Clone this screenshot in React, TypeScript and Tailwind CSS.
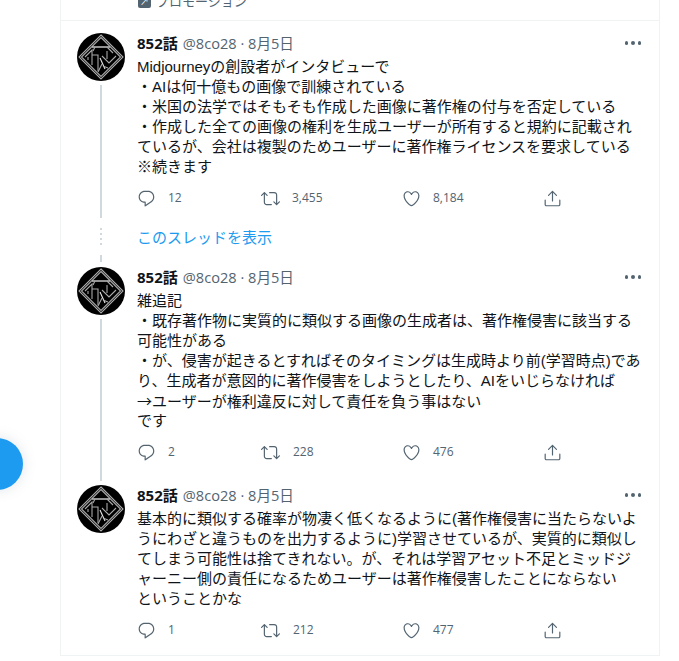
import type { ReactNode } from 'react';

const paths = {
  reply:
    'M14.046 2.242l-4.148-.01h-.002c-4.374 0-7.8 3.427-7.8 7.802 0 4.098 3.186 7.206 7.465 7.37v3.828c0 .108.044.286.12.403.142.225.384.347.632.347.138 0 .277-.038.402-.118.264-.168 6.473-4.14 8.088-5.506 1.902-1.61 3.04-3.97 3.043-6.312v-.017c-.006-4.367-3.43-7.787-7.8-7.788zm3.787 12.972c-1.134.96-4.862 3.405-6.772 4.643V16.67c0-.414-.335-.75-.75-.75h-.396c-3.66 0-6.318-2.476-6.318-5.886 0-3.534 2.768-6.302 6.3-6.302l4.147.01h.002c3.532 0 6.3 2.766 6.302 6.296-.003 1.91-.942 3.844-2.514 5.176z',
  retweet:
    'M23.77 15.67c-.292-.293-.767-.293-1.06 0l-2.22 2.22V7.65c0-2.068-1.683-3.75-3.75-3.75h-5.85c-.414 0-.75.336-.75.75s.336.75.75.75h5.85c1.24 0 2.25 1.01 2.25 2.25v10.24l-2.22-2.22c-.293-.293-.768-.293-1.06 0s-.294.768 0 1.06l3.5 3.5c.145.147.337.22.53.22s.383-.072.53-.22l3.5-3.5c.294-.292.294-.767 0-1.06zm-10.66 3.28H7.26c-1.24 0-2.25-1.01-2.25-2.25V6.46l2.22 2.22c.148.147.34.22.532.22s.384-.073.53-.22c.293-.293.293-.768 0-1.06l-3.5-3.5c-.293-.294-.768-.294-1.06 0l-3.5 3.5c-.294.292-.294.767 0 1.06s.767.293 1.06 0l2.22-2.22V16.7c0 2.068 1.683 3.75 3.75 3.75h5.85c.414 0 .75-.336.75-.75s-.337-.75-.75-.75z',
  like:
    'M12 21.638h-.014C9.403 21.59 1.95 14.856 1.95 8.478c0-3.064 2.525-5.754 5.403-5.754 2.29 0 3.83 1.58 4.646 2.73.814-1.148 2.354-2.73 4.645-2.73 2.88 0 5.404 2.69 5.404 5.755 0 6.376-7.454 13.11-10.037 13.157H12zM7.354 4.225c-2.08 0-3.903 1.988-3.903 4.255 0 5.74 7.034 11.596 8.55 11.658 1.518-.062 8.55-5.917 8.55-11.658 0-2.267-1.823-4.255-3.903-4.255-2.528 0-3.94 2.936-3.952 2.965-.23.562-1.156.562-1.387 0-.014-.03-1.425-2.965-3.954-2.965z',
  share:
    'M17.53 7.47l-5-5c-.293-.293-.768-.293-1.06 0l-5 5c-.294.293-.294.768 0 1.06s.767.294 1.06 0l3.72-3.72V15c0 .414.336.75.75.75s.75-.336.75-.75V4.81l3.72 3.72c.146.147.338.22.53.22s.384-.072.53-.22c.293-.293.293-.767 0-1.06zM19.708 21.944H4.292C3.028 21.944 2 20.916 2 19.652V14c0-.414.336-.75.75-.75s.75.336.75.75v5.652c0 .437.355.792.792.792h15.416c.437 0 .792-.355.792-.792V14c0-.414.336-.75.75-.75s.75.336.75.75v5.652c0 1.264-1.028 2.292-2.292 2.292z',
};

function Icon({ d }: { d: string }) {
  return (
    <svg viewBox="0 0 24 24" className="h-[19px] w-[19px] shrink-0 fill-[#536471]">
      <path d={d} />
    </svg>
  );
}

function Avatar() {
  return (
    <svg viewBox="0 0 48 48" className="h-12 w-12 shrink-0 rounded-full bg-black">
      <g fill="none" stroke="#a8a8a8" strokeWidth="1.1">
        <path d="M24 2 L46 24 L24 46 L2 24 Z" />
        <path d="M24 4.5 L43.5 24 L24 43.5 L4.500 24 Z" />
        <path d="M15 14 H33" strokeWidth="1.6" stroke="#c4c4c4" />
        <path d="M18 14 L16 18 M30 14 L36 20" />
        <path d="M8 24 L15 17 V32" />
        <path d="M11 27 L11 24 M15 22 H21 V38" />
        <path d="M25 23 L32 30 L39 23" />
        <path d="M30 18 V26" />
        <path d="M23 25 L28 36" stroke="#e8e8e8" />
        <path d="M25 31 L21 39 M26 33 L31 35" />
      </g>
    </svg>
  );
}

function Actions({ counts, offsets }: { counts: string[]; offsets: string[] }) {
  const icons = [paths.reply, paths.retweet, paths.like];
  const widths = ['w-[124px]', 'w-[141px]', 'w-[141px]'];
  return (
    <div className="mt-[11px] flex h-5 items-center text-[12px] text-[#536471]">
      {icons.map((d, i) => (
        <div key={i} className={`flex items-center ${widths[i]}`}>
          <Icon d={d} />
          <span className={offsets[i]}>{counts[i]}</span>
        </div>
      ))}
      <Icon d={paths.share} />
    </div>
  );
}

function Header() {
  return (
    <div className="relative flex h-5 items-center leading-5">
      <span className="text-[15px] font-bold text-[#0f1419]">852話</span>
      <span className="ml-[5px] text-[14.6px] text-[#536471]">@8co28 · 8月5日</span>
      <div className="absolute right-[2px] top-[8px] flex gap-[3px]">
        <i className="h-[3.5px] w-[3.5px] rounded-full bg-[#536471]" />
        <i className="h-[3.5px] w-[3.5px] rounded-full bg-[#536471]" />
        <i className="h-[3.5px] w-[3.5px] rounded-full bg-[#536471]" />
      </div>
    </div>
  );
}

function Body({ lines }: { lines: ReactNode[] }) {
  return (
    <div className="mt-1 font-['Liberation_Sans','Noto_Sans_CJK_JP',sans-serif] text-[15px] leading-5 text-[#0f1419]">
      {lines.map((l, i) => (
        <div key={i} className="h-5 whitespace-nowrap">
          {l}
        </div>
      ))}
    </div>
  );
}

export default function App() {
  return (
    <div className="flex h-[661px] w-[679px] overflow-hidden bg-white font-['Open_Sans','Noto_Sans_CJK_JP',sans-serif]">
      <div className="relative w-[60px] shrink-0">
        <div className="absolute left-[-29px] top-[438px] h-[52px] w-[52px] rounded-full bg-[#1d9bf0] shadow-[0_0_14px_rgba(101,119,134,0.2)]" />
      </div>

      <main className="h-[656px] w-[600px] shrink-0 border-x border-b border-[#eff3f4]">
        <div className="h-[21px] overflow-hidden border-b border-[#eff3f4] pl-[77px]">
          <div className="mt-[-9px] flex items-center gap-[5px] text-[13px] leading-5 text-[#536471]">
            <span className="flex h-[13px] w-[13px] items-center justify-center rounded-[2px] bg-[#536471] text-[9px] leading-none text-white">
              ↗
            </span>
            プロモーション
          </div>
        </div>

        {/* first tweet */}
        <div className="flex gap-3 px-4 pt-3">
          <div className="flex w-12 flex-col items-center">
            <Avatar />
            <div className="mt-1 w-0.5 flex-1 bg-[#cfd9de]" />
          </div>
          <div className="min-w-0 flex-1 pb-[10px]">
            <Header />
            <Body
              lines={[
                'Midjourneyの創設者がインタビューで',
                '・AIは何十億もの画像で訓練されている',
                '・米国の法学ではそもそも作成した画像に著作権の付与を否定している',
                '・作成した全ての画像の権利を生成ユーザーが所有すると規約に記載され',
                'ているが、会社は複製のためユーザーに著作権ライセンスを要求している',
                '※続きます',
              ]}
            />
            <Actions counts={['12', '3,455', '8,184']} offsets={['ml-[12px]', 'ml-[12px]', 'ml-[12px]']} />
          </div>
        </div>

        {/* show thread */}
        <div className="flex h-[49px] gap-3 px-4">
          <div className="flex w-12 flex-col items-center">
            <div className="mt-[10px] h-[18px] w-0.5 bg-[repeating-linear-gradient(to_bottom,#cfd9de_0,#cfd9de_2px,transparent_2px,transparent_5px)]" />
            <div className="mb-[5px] mt-[9px] w-0.5 flex-1 bg-[#cfd9de]" />
          </div>
          <div className="pt-[9px] text-[15px] leading-5 text-[#1d9bf0]">このスレッドを表示</div>
        </div>

        {/* second tweet */}
        <div className="flex gap-3 px-4">
          <div className="flex w-12 flex-col items-center">
            <Avatar />
            <div className="mt-1 w-0.5 flex-1 bg-[#cfd9de]" />
          </div>
          <div className="min-w-0 flex-1 pb-[19px]">
            <Header />
            <Body
              lines={[
                '雑追記',
                '・既存著作物に実質的に類似する画像の生成者は、著作権侵害に該当する',
                '可能性がある',
                '・が、侵害が起きるとすればそのタイミングは生成時より前(学習時点)であ',
                'り、生成者が意図的に著作侵害をしようとしたり、AIをいじらなければ',
                <>
                  <span className="font-['Noto_Sans_CJK_JP',sans-serif]">→</span>
                  ユーザーが権利違反に対して責任を負う事はない
                </>,
                'です',
              ]}
            />
            <Actions counts={['2', '228', '476']} offsets={['ml-[12px]', 'ml-[13px]', 'ml-[12px]']} />
          </div>
        </div>

        {/* third tweet */}
        <div className="flex gap-3 px-4 pt-1">
          <Avatar />
          <div className="min-w-0 flex-1">
            <Header />
            <Body
              lines={[
                '基本的に類似する確率が物凄く低くなるように(著作権侵害に当たらないよ',
                'うにわざと違うものを出力するように)学習させているが、実質的に類似し',
                'てしまう可能性は捨てきれない。が、それは学習アセット不足とミッドジ',
                'ャーニー側の責任になるためユーザーは著作権侵害したことにならない',
                'ということかな',
              ]}
            />
            <Actions counts={['1', '212', '477']} offsets={['ml-[12px]', 'ml-[13px]', 'ml-[12px]']} />
          </div>
        </div>
      </main>
    </div>
  );
}
